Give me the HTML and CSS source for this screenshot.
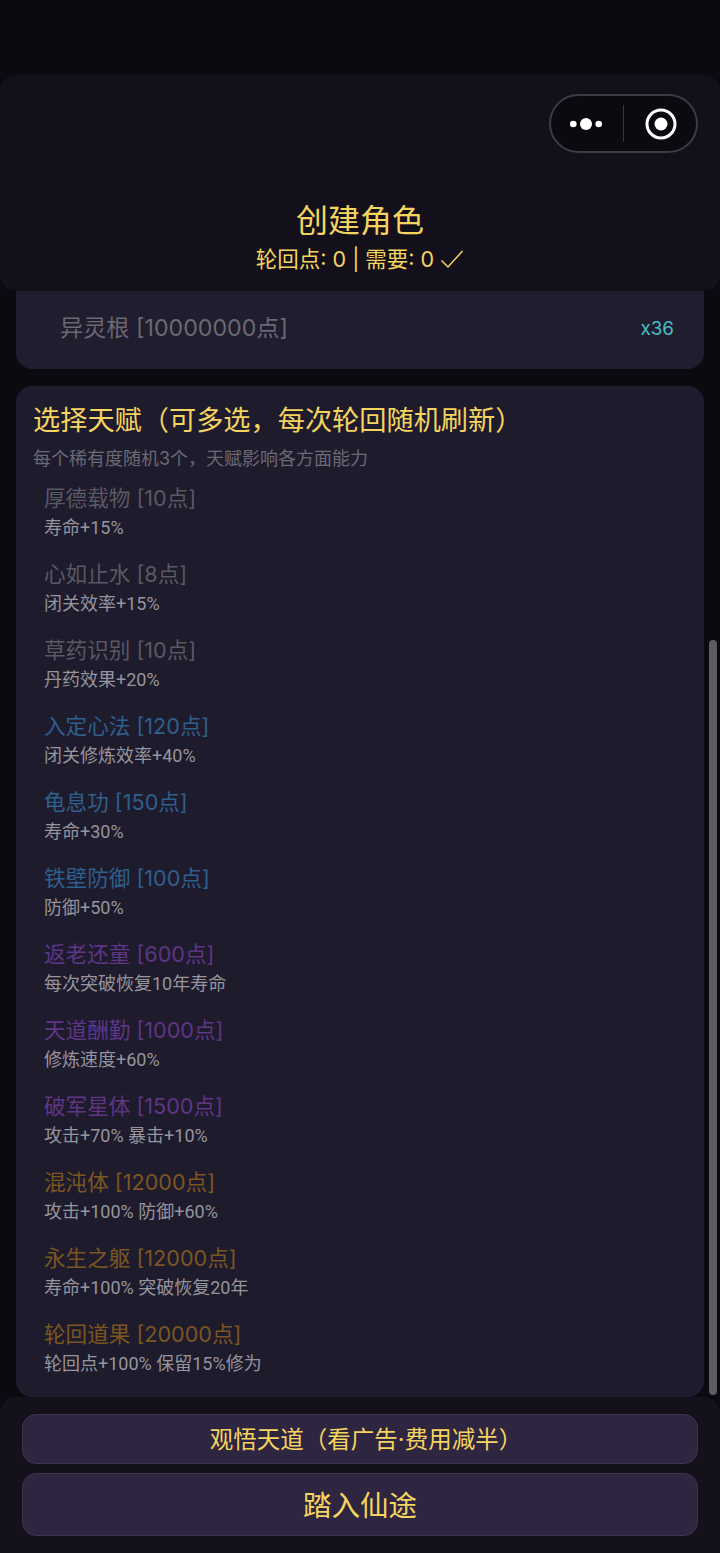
FILE: index.html
```html
<!DOCTYPE html>
<html lang="zh">
<head>
<meta charset="utf-8">
<title>创建角色</title>
<link rel="stylesheet" href="styles.css">
</head>
<body>
<div class="page">
  <header class="header">
    <div class="capsule">
      <svg class="cap-dots" width="32" height="12" viewBox="0 0 32 12"><circle cx="3.300" cy="6" r="3.300" fill="#fff"/><circle cx="16" cy="6" r="6" fill="#fff"/><circle cx="28.700" cy="6" r="3.300" fill="#fff"/></svg>
      <span class="cap-line"></span>
      <svg class="cap-target" width="32" height="32" viewBox="0 0 32 32"><circle cx="16" cy="16" r="14" fill="none" stroke="#fff" stroke-width="3"/><circle cx="16" cy="16" r="6.500" fill="#fff"/></svg>
    </div>
    <h1 class="title">创建角色</h1>
    <p class="points">轮回点: 0 | 需要: 0 <svg class="check" width="24" height="20" viewBox="0 0 24 20"><path d="M1.500 11.500 L8 18 L22.500 2" fill="none" stroke="#f5d45f" stroke-width="1.500"/></svg></p>
  </header>
  <main class="main">
    <section class="root-card">
      <span class="root-name">异灵根 [10000000点]</span>
      <span class="root-mult">x36</span>
    </section>
    <section class="talent-card">
      <h2 class="talent-head">选择天赋（可多选，每次轮回随机刷新）</h2>
      <p class="talent-sub">每个稀有度随机3个，天赋影响各方面能力</p>
      <ul class="talents">
        <li class="talent"><div class="name common">厚德载物 [10点]</div><div class="desc">寿命+15%</div></li>
        <li class="talent"><div class="name common">心如止水 [8点]</div><div class="desc">闭关效率+15%</div></li>
        <li class="talent"><div class="name common">草药识别 [10点]</div><div class="desc">丹药效果+20%</div></li>
        <li class="talent"><div class="name rare">入定心法 [120点]</div><div class="desc">闭关修炼效率+40%</div></li>
        <li class="talent"><div class="name rare">龟息功 [150点]</div><div class="desc">寿命+30%</div></li>
        <li class="talent"><div class="name rare">铁壁防御 [100点]</div><div class="desc">防御+50%</div></li>
        <li class="talent"><div class="name epic">返老还童 [600点]</div><div class="desc">每次突破恢复10年寿命</div></li>
        <li class="talent"><div class="name epic">天道酬勤 [1000点]</div><div class="desc">修炼速度+60%</div></li>
        <li class="talent"><div class="name epic">破军星体 [1500点]</div><div class="desc">攻击+70% 暴击+10%</div></li>
        <li class="talent"><div class="name legend">混沌体 [12000点]</div><div class="desc">攻击+100% 防御+60%</div></li>
        <li class="talent"><div class="name legend">永生之躯 [12000点]</div><div class="desc">寿命+100% 突破恢复20年</div></li>
        <li class="talent"><div class="name legend">轮回道果 [20000点]</div><div class="desc">轮回点+100% 保留15%修为</div></li>
      </ul>
    </section>
    <div class="scrollbar"></div>
  </main>
  <footer class="footer">
    <button class="btn btn-ad">观悟天道（看广告·费用减半）</button>
    <button class="btn btn-start">踏入仙途</button>
  </footer>
</div>
</body>
</html>
```
FILE: styles.css
```css
* { box-sizing: border-box; }
html, body { margin: 0; padding: 0; background: #0c0a11; }
body { font-family: "Inter", "Noto Sans CJK SC", sans-serif; }
.page {
  width: 720px;
  height: 1553px;
  padding-top: 75px;
  display: flex;
  flex-direction: column;
  overflow: hidden;
}
.header {
  position: relative;
  height: 216px;
  flex: none;
  z-index: 2;
  padding-top: 124px;
  background: #13101b;
  border-radius: 16px;
  text-align: center;
}
.capsule {
  position: absolute;
  top: 19px;
  left: 549px;
  width: 149px;
  height: 59px;
  display: flex;
  align-items: center;
  padding-left: 19px;
  background: #0c0a11;
  border: 2px solid #3c3b42;
  border-radius: 30px;
}
.cap-line { width: 1px; height: 37px; margin-left: 21px; background: #38373e; }
.cap-target { margin-left: 21px; }
.title {
  margin: 0;
  font-size: 32px;
  font-weight: 400;
  line-height: 44px;
  color: #f5d45f;
}
.points {
  margin: 0;
  font-size: 21.500px;
  line-height: 32px;
  color: #f5d45f;
}
.check { vertical-align: -2px; }
.main {
  position: relative;
  flex: 1;
  min-height: 0;
  margin-top: -1px;
  padding: 0 16px;
}
.root-card {
  height: 79px;
  padding: 0 30px 8px 44px;
  display: flex;
  align-items: center;
  justify-content: space-between;
  background: #201d2e;
  border-radius: 0 0 16px 16px;
}
.root-name { font-size: 23.200px; color: #6a6873; }
.root-mult { margin-top: 6px; font-size: 18.800px; color: #48bfc6; }
.talent-card {
  height: 1011px;
  margin-top: 17px;
  padding: 17px 17px 0;
  background: #1e1b2d;
  border-radius: 16px;
}
.talent-head {
  margin: 0;
  font-size: 27.200px;
  font-weight: 400;
  line-height: 36px;
  color: #f5d45f;
}
.talent-sub {
  margin: 7px 0 0;
  font-size: 18px;
  line-height: 26px;
  color: #6b6975;
}
.talents {
  margin: 0;
  padding: 10px 0 0 11px;
  list-style: none;
}
.talent { height: 76px; }
.name { font-size: 21.600px; line-height: 32px; }
.desc {
  margin-top: 1px;
  font-family: "Roboto", "Noto Sans CJK SC", sans-serif;
  font-size: 18px;
  line-height: 26px;
  color: #96949d;
}
.common { color: #5a5862; }
.rare { color: #2f5f8c; }
.epic { color: #5f3585; }
.legend { color: #7c5621; }
.scrollbar {
  position: absolute;
  top: 350px;
  left: 709px;
  width: 8px;
  height: 755px;
  background: #5d5c63;
  border-radius: 4px;
}
.footer {
  flex: none;
  height: 156px;
  padding: 17px 22px 0;
  display: flex;
  flex-direction: column;
  gap: 9px;
  background: #14111c;
  border-radius: 16px 16px 0 0;
  z-index: 2;
}
.btn {
  display: block;
  width: 100%;
  padding: 0;
  font-family: inherit;
  color: #f5d45f;
  background: #2e2540;
  border: 1px solid #3d3450;
  border-radius: 14px;
}
.btn-ad { height: 50px; padding: 0 0 3px 12px; font-size: 23.500px; }
.btn-start { height: 63px; padding-bottom: 2px; font-size: 28.500px; }
```
